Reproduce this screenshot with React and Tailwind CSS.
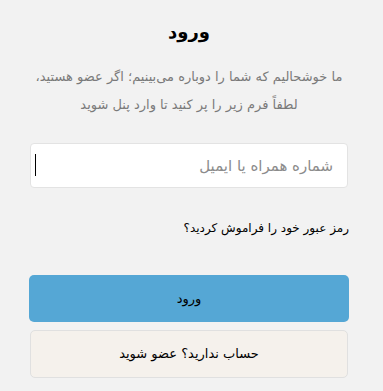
export default function App() {
  return (
    <div
      dir="rtl"
      className="min-h-screen bg-[#f2f2f2] text-black"
      style={{ fontFamily: '"DejaVu Sans", "Noto Sans", sans-serif' }}
    >
      <div className="mr-[34px] flex w-[320px] flex-col pt-[17px]">
        <h1 className="text-center text-[18px] font-bold leading-[30px]">ورود</h1>

        <p className="mt-[16px] text-center text-[13px] leading-[28px] text-[#7a7a7a]">
          ما خوشحالیم که شما را دوباره می‌بینیم؛ اگر عضو هستید،
          <br />
          لطفاً فرم زیر را پر کنید تا وارد پنل شوید
        </p>

        {/* Phone / email field */}
        <div className="relative mx-px mt-[24px]">
          <input
            type="text"
            placeholder="شماره همراه یا ایمیل"
            className="h-[45px] w-full rounded-[4px] border border-[#e3e3e3] bg-white px-[14px] text-[15px] text-black outline-none placeholder:text-[#8c8c8c]"
          />
          <span className="absolute left-[5px] top-[11px] h-[22px] w-px bg-black" />
        </div>

        <a href="#" className="mt-[30px] self-start text-[12px] leading-[20px] text-black">
          رمز عبور خود را فراموش کردید؟
        </a>

        <button className="mt-[37px] h-[47px] w-full rounded-[5px] bg-[#55a7d5] text-[13px] text-black">
          ورود
        </button>

        <button className="mx-px mt-[8px] h-[48px] rounded-[5px] border border-[#e0e0e0] bg-[#f5f1ec] text-[13px] text-black">
          حساب ندارید؟ عضو شوید
        </button>
      </div>
    </div>
  )
}
